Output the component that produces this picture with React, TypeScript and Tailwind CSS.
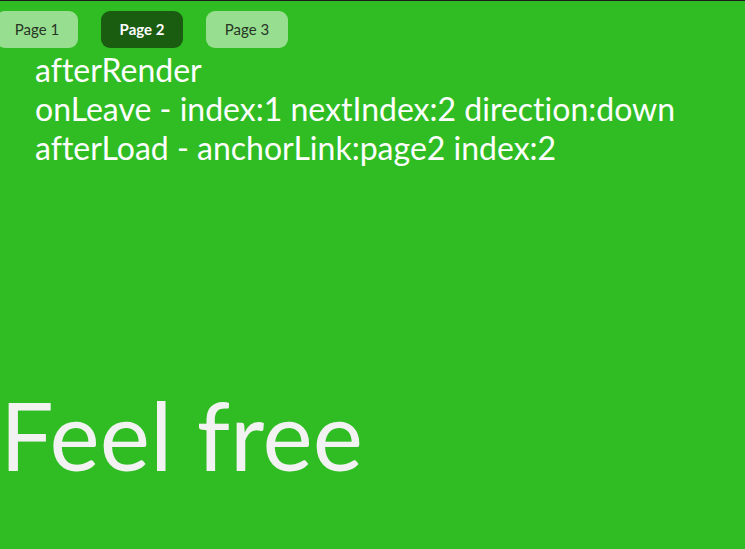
import React from "react";

export default function App() {
  return (
    <div
      className="w-[745px] h-[549px] overflow-hidden bg-[#2fbd23] border-t border-[#1c1c1c] flex flex-col [font-variant-ligatures:none]"
      style={{ fontFamily: "Lato, 'Open Sans', sans-serif" }}
    >
      <div className="flex gap-[23px] pt-[10px] ml-[-4px]">
        <button className="w-[82px] h-[37px] rounded-[9px] bg-[#98de90] text-[#263524] text-[15px]">Page 1</button>
        <button className="w-[82px] h-[37px] rounded-[9px] bg-[#1a5c10] text-white text-[15px] font-bold">Page 2</button>
        <button className="w-[82px] h-[37px] rounded-[9px] bg-[#98de90] text-[#263524] text-[15px]">Page 3</button>
      </div>
      <div className="pl-[35px] mt-[2px] text-white text-[32px] leading-[39px]">
        <div>afterRender</div>
        <div>onLeave - index:1 nextIndex:2 direction:down</div>
        <div>afterLoad - anchorLink:page2 index:2</div>
      </div>
      <div className="mt-[210px] text-[#f2f2f2] text-[95px] leading-[114px]">Feel free</div>
    </div>
  );
}
